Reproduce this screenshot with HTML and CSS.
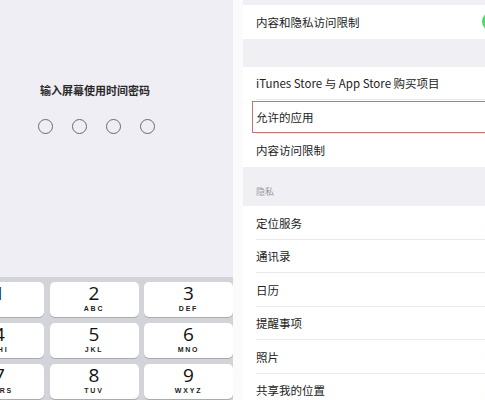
FILE: index.html
```html
<!DOCTYPE html>
<html lang="zh-CN">

<head>
    <meta charset="UTF-8">
    <title>屏幕使用时间</title>
    <link rel="stylesheet" href="styles.css">
</head>

<body>
    <div id="screen">
        <!-- 左边：输入密码 -->
        <div id="passcode">
            <div class="prompt">
                <p class="title">输入屏幕使用时间密码</p>
                <ul class="dots">
                    <li></li>
                    <li></li>
                    <li></li>
                    <li></li>
                </ul>
            </div>
            <div class="keypad">
                <div class="key"><b>1</b><span>&nbsp;</span></div>
                <div class="key"><b>2</b><span>ABC</span></div>
                <div class="key"><b>3</b><span>DEF</span></div>
                <div class="key"><b>4</b><span>GHI</span></div>
                <div class="key"><b>5</b><span>JKL</span></div>
                <div class="key"><b>6</b><span>MNO</span></div>
                <div class="key"><b>7</b><span>PQRS</span></div>
                <div class="key"><b>8</b><span>TUV</span></div>
                <div class="key"><b>9</b><span>WXYZ</span></div>
            </div>
        </div>

        <div id="divider"></div>

        <!-- 右边：设置列表 -->
        <div id="settings">
            <div class="gap top"></div>
            <div class="group">
                <div class="row">内容和隐私访问限制<i class="toggle"></i></div>
            </div>
            <div class="gap"></div>
            <div class="group">
                <div class="row">iTunes Store 与 App Store 购买项目</div>
                <div class="row marked">允许的应用</div>
                <div class="row">内容访问限制</div>
            </div>
            <div class="gap label">隐私</div>
            <div class="group">
                <div class="row">定位服务<i class="arrow">›</i></div>
                <div class="row">通讯录<i class="arrow">›</i></div>
                <div class="row">日历<i class="arrow">›</i></div>
                <div class="row">提醒事项<i class="arrow">›</i></div>
                <div class="row">照片<i class="arrow">›</i></div>
                <div class="row">共享我的位置<i class="arrow">›</i></div>
            </div>
        </div>
    </div>
</body>

</html>
```

FILE: styles.css
```css
* {
    margin: 0;
    padding: 0;
    list-style: none;
    box-sizing: border-box;
}

body {
    width: 485px;
    height: 400px;
    overflow: hidden;
    font-family: "Noto Sans CJK SC", "Liberation Sans", sans-serif;
    color: #222;
}

#screen {
    display: flex;
    height: 400px;
}

/* 左边 */
#passcode {
    width: 233px;
    background: #efeef4;
    display: flex;
    flex-direction: column;
}

.prompt {
    height: 277px;
    padding: 82px 0 0 40px;
}

.title {
    font-size: 11px;
    font-weight: 700;
    line-height: 17px;
    color: #2a2a2a;
}

.dots {
    display: flex;
    gap: 19px;
    margin: 20px 0 0 -2px;
}

.dots li {
    width: 15px;
    height: 15px;
    border: 1.6px solid #6a6a6e;
    border-radius: 100%;
}

.keypad {
    flex: 1;
    background: #d3d4d9;
    display: grid;
    grid-template-columns: 89px 89px 89px;
    grid-auto-rows: 35px;
    column-gap: 5.5px;
    row-gap: 6px;
    padding-top: 5px;
    margin-left: -45px;
    margin-right: -5px;
}

.key {
    background: #fff;
    border-radius: 5px;
    box-shadow: 0 1px 0 #a9abb0;
    display: flex;
    flex-direction: column;
    align-items: center;
    padding-top: 1px;
}

.key b {
    font-family: "Open Sans", "Liberation Sans", sans-serif;
    font-weight: 400;
    font-size: 19px;
    line-height: 21px;
    color: #111;
}

.key span {
    font-family: "Liberation Sans", sans-serif;
    font-weight: 700;
    font-size: 7px;
    letter-spacing: 1.8px;
    line-height: 9px;
    color: #222;
}

#divider {
    width: 10px;
    background: #fbfbfc;
}

/* 右边 */
#settings {
    flex: 1;
    background: #efeff4;
    overflow: hidden;
}

.gap {
    height: 28px;
}

.gap.top {
    height: 5px;
}

.gap.label {
    height: 39px;
    padding: 19px 0 0 13px;
    font-size: 9px;
    line-height: 12px;
    color: #9a9a9f;
}

.group {
    background: #fff;
}

.row {
    position: relative;
    height: 33.5px;
    display: flex;
    align-items: center;
    padding-left: 13px;
    font-size: 11.5px;
    color: #232323;
    background: linear-gradient(#e9e9ec, #e9e9ec) no-repeat 13px 100% / 100% 1px;
}

.row:last-child {
    background: none;
}

.marked::after {
    content: "";
    position: absolute;
    left: 9px;
    right: 0;
    top: 1px;
    bottom: 1px;
    border: 1.5px solid #c27772;
    border-right: none;
}

.toggle {
    position: absolute;
    left: 239px;
    top: 7px;
    width: 30px;
    height: 19px;
    border-radius: 10px;
    background: #4cd964;
}

.arrow {
    position: absolute;
    left: 241px;
    font-style: normal;
    font-size: 16px;
    color: #d6d6da;
}
```
